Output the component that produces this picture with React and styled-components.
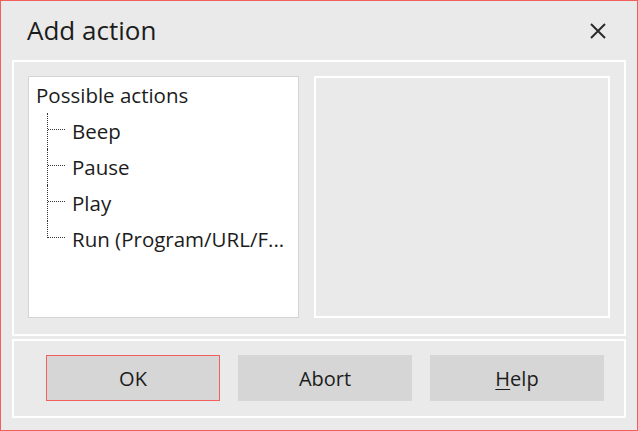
import styled, { createGlobalStyle } from "styled-components";

const GlobalStyle = createGlobalStyle`
  html, body {
    margin: 0;
    padding: 0;
    background: #eaeaea;
  }
`;

const Window = styled.div`
  box-sizing: border-box;
  width: 638px;
  height: 431px;
  border: 1px solid #f25f5c;
  background: #eaeaea;
  padding: 0 11px 12px 11px;
  display: flex;
  flex-direction: column;
  font-family: "Open Sans", "Noto Sans", sans-serif;
  color: #1c1c1c;
`;

const TitleBar = styled.div`
  height: 59px;
  display: flex;
  align-items: center;
  justify-content: space-between;
  padding: 0 16px 0 15px;
  box-sizing: border-box;
`;

const Title = styled.h1`
  margin: 0;
  font-size: 26px;
  font-weight: 400;
  color: #1c1c1c;
  line-height: 1;
  padding-bottom: 1px;
`;

const CloseButton = styled.button`
  border: 0;
  background: none;
  padding: 0;
  width: 24px;
  height: 24px;
  display: flex;
  align-items: center;
  justify-content: center;
  color: #2b2b2b;
  cursor: pointer;
`;

const ContentPanel = styled.div`
  box-sizing: border-box;
  height: 276px;
  border: 2px solid #fff;
  padding: 14px 14px 16px 14px;
  display: flex;
  gap: 15px;
`;

const TreeBox = styled.div`
  box-sizing: border-box;
  width: 271px;
  background: #fff;
  border: 1px solid #d4d4d4;
  font-size: 20.5px;
  overflow: hidden;
`;

const RootRow = styled.div`
  height: 36px;
  display: flex;
  align-items: center;
  padding-left: 7px;
`;

const ChildList = styled.ul`
  list-style: none;
  margin: 0;
  padding: 0;
`;

const ChildRow = styled.li`
  position: relative;
  height: 36px;
  display: flex;
  align-items: center;
  padding-left: 43px;
  white-space: nowrap;

  &::before {
    content: "";
    position: absolute;
    left: 18px;
    top: 0;
    height: ${(p) => (p.$last ? "17px" : "36px")};
    border-left: 1px dotted #333;
  }

  &::after {
    content: "";
    position: absolute;
    left: 19px;
    top: 16px;
    width: 17px;
    border-top: 1px dotted #333;
  }
`;

const PreviewPanel = styled.div`
  flex: 1;
  box-sizing: border-box;
  border: 2px solid #fff;
  background: #eaeaea;
`;

const ButtonPanel = styled.div`
  box-sizing: border-box;
  margin-top: 3px;
  height: 79px;
  border: 2px solid #fff;
  padding: 14px 0 0 32px;
  display: flex;
  gap: 18px;
`;

const Button = styled.button`
  box-sizing: border-box;
  width: 174px;
  height: 46px;
  background: #d6d6d6;
  border: 1px solid ${(p) => (p.$focused ? "#f25f5c" : "#d6d6d6")};
  font-family: "Open Sans", "Noto Sans", sans-serif;
  font-size: 20px;
  color: #1c1c1c;
  padding: 0;
  cursor: pointer;

  u {
    text-decoration-thickness: 1px;
    text-underline-offset: 3px;
  }
`;

const actions = ["Beep", "Pause", "Play", "Run (Program/URL/F..."];

export default function App() {
  return (
    <>
      <GlobalStyle />
      <Window>
        <TitleBar>
          <Title>Add action</Title>
          <CloseButton aria-label="Close">
            <svg width="16" height="16" viewBox="0 0 16 16">
              <path
                d="M1 1 L15 15 M15 1 L1 15"
                stroke="currentColor"
                strokeWidth="2"
                fill="none"
              />
            </svg>
          </CloseButton>
        </TitleBar>
        <ContentPanel>
          <TreeBox>
            <RootRow>Possible actions</RootRow>
            <ChildList>
              {actions.map((a, i) => (
                <ChildRow key={a} $last={i === actions.length - 1}>
                  {a}
                </ChildRow>
              ))}
            </ChildList>
          </TreeBox>
          <PreviewPanel />
        </ContentPanel>
        <ButtonPanel>
          <Button $focused>OK</Button>
          <Button>Abort</Button>
          <Button>
            <u>H</u>elp
          </Button>
        </ButtonPanel>
      </Window>
    </>
  );
}
